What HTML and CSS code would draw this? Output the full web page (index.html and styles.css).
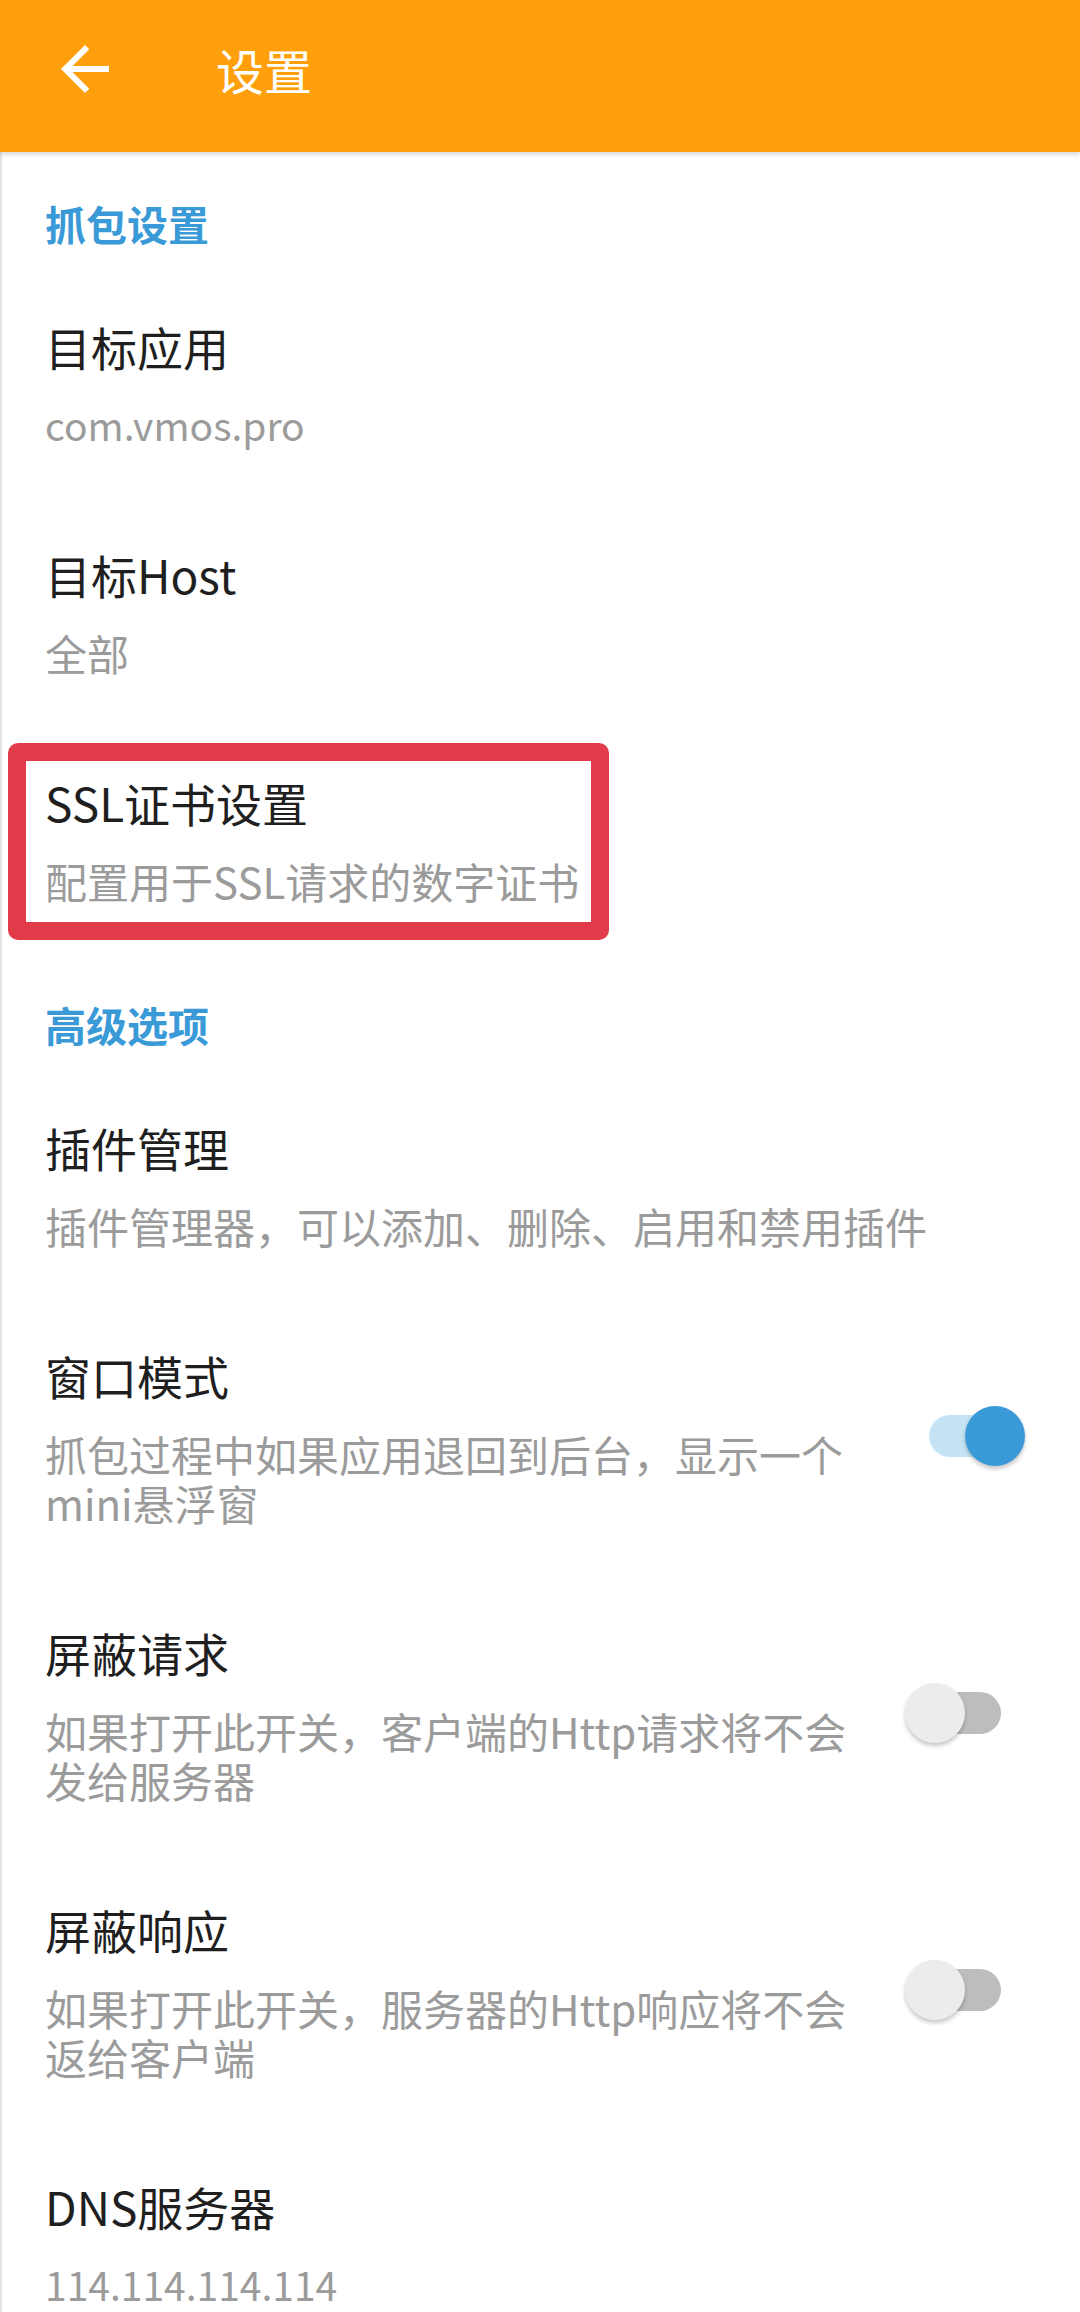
FILE: index.html
```
<!DOCTYPE html>
<html lang="zh-CN">
<head>
<meta charset="utf-8">
<title>设置</title>
<link rel="stylesheet" href="styles.css">
</head>
<body>
<header class="appbar">
  <svg class="back" viewBox="0 0 24 24" width="72" height="72" aria-hidden="true">
    <path d="M20 11H7.83l5.59-5.59L12 4l-8 8 8 8 1.41-1.41L7.83 13H20v-2z" fill="#ffffff"/>
  </svg>
  <h1 class="appbar-title">设置</h1>
</header>
<main class="content">
  <div class="category">抓包设置</div>
  <div class="pref">
    <div class="text">
      <div class="title">目标应用</div>
      <div class="summary value">com.vmos.pro</div>
    </div>
  </div>
  <div class="pref">
    <div class="text">
      <div class="title">目标Host</div>
      <div class="summary">全部</div>
    </div>
  </div>
  <div class="pref">
    <div class="text">
      <div class="title">SSL证书设置</div>
      <div class="summary">配置用于SSL请求的数字证书</div>
    </div>
    <div class="highlight"></div>
  </div>
  <div class="category">高级选项</div>
  <div class="pref">
    <div class="text">
      <div class="title">插件管理</div>
      <div class="summary">插件管理器，可以添加、删除、启用和禁用插件</div>
    </div>
  </div>
  <div class="pref">
    <div class="text">
      <div class="title">窗口模式</div>
      <div class="summary">抓包过程中如果应用退回到后台，显示一个mini悬浮窗</div>
    </div>
    <div class="switch on"><span class="track"></span><span class="knob"></span></div>
  </div>
  <div class="pref">
    <div class="text">
      <div class="title">屏蔽请求</div>
      <div class="summary">如果打开此开关，客户端的Http请求将不会发给服务器</div>
    </div>
    <div class="switch"><span class="track"></span><span class="knob"></span></div>
  </div>
  <div class="pref">
    <div class="text">
      <div class="title">屏蔽响应</div>
      <div class="summary">如果打开此开关，服务器的Http响应将不会返给客户端</div>
    </div>
    <div class="switch"><span class="track"></span><span class="knob"></span></div>
  </div>
  <div class="pref">
    <div class="text">
      <div class="title">DNS服务器</div>
      <div class="summary value">114.114.114.114</div>
    </div>
  </div>
</main>
</body>
</html>
```
FILE: styles.css
```
* { box-sizing: border-box; }
html, body {
  margin: 0;
  padding: 0;
}
body {
  width: 1080px;
  height: 2312px;
  overflow: hidden;
  background: #ffffff;
  font-family: "Noto Sans CJK SC", "Noto Sans", sans-serif;
}
.appbar {
  position: relative;
  z-index: 2;
  height: 152px;
  padding-bottom: 14px;
  background: #ff9f0b;
  display: flex;
  align-items: center;
  box-shadow: 0 2px 5px rgba(0, 0, 0, 0.18);
}
.back {
  margin-left: 49px;
  flex-shrink: 0;
}
.appbar-title {
  margin: 0 0 0 95px;
  font-size: 48px;
  line-height: 60px;
  font-weight: 400;
  color: #ffffff;
}
.content {
  border-left: 2px solid #e4e4e4;
  min-height: 2160px;
}
.category {
  padding: 43px 45px 18px 43px;
  font-size: 41px;
  line-height: 56px;
  font-weight: 700;
  color: #3a9ad8;
}
.pref {
  position: relative;
  display: flex;
  align-items: center;
  padding: 47px 55px 48px 43px;
}
.text {
  flex: 1;
  min-width: 0;
}
.title {
  font-size: 46px;
  line-height: 60px;
  color: #1f1f1f;
}
.summary {
  margin-top: 24px;
  font-size: 42px;
  line-height: 49px;
  color: #9b9b9b;
}
.summary.value {
  font-size: 39px;
}
.highlight {
  position: absolute;
  left: 6px;
  top: 18px;
  width: 601px;
  height: 197px;
  border: 18px solid #e13a49;
  border-radius: 10px;
}
.switch {
  position: relative;
  flex-shrink: 0;
  width: 120px;
  height: 60px;
  margin-left: 45px;
}
.track {
  position: absolute;
  left: 24px;
  top: 9px;
  width: 72px;
  height: 42px;
  border-radius: 21px;
  background: #bdbdbd;
}
.knob {
  position: absolute;
  left: 0;
  top: 0;
  width: 60px;
  height: 60px;
  border-radius: 50%;
  background: #ececec;
  box-shadow: 0 3px 4px rgba(0, 0, 0, 0.22);
}
.switch.on .track {
  background: #c6e3f6;
}
.switch.on .knob {
  left: 60px;
  background: #3a9ad8;
}
```
